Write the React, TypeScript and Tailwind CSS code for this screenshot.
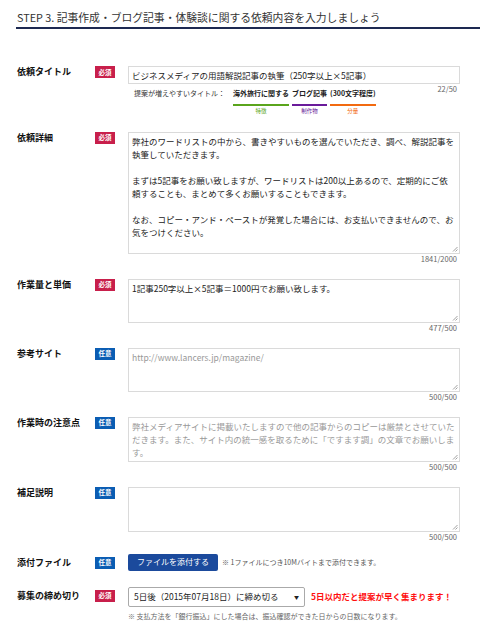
import React from "react";

const font = { fontFamily: '"Noto Sans CJK JP", "Noto Sans", sans-serif' };

const Badge = ({ required }: { required: boolean }) => (
  <div
    className={
      "w-[20px] h-[12px] flex items-center justify-center text-white text-[6.5px] leading-none font-bold " +
      (required ? "bg-[#c81f4b]" : "bg-[#0b5db3]")
    }
  >
    {required ? "必須" : "任意"}
  </div>
);

const Grip = () => (
  <svg className="absolute right-[1px] bottom-[1px]" width="6" height="6" viewBox="0 0 6 6">
    <path d="M5.5 1 L1 5.5 M5.5 3.5 L3.5 5.5" stroke="#888" strokeWidth="0.8" />
  </svg>
);

const Row = ({
  label,
  required,
  className = "",
  children,
}: {
  label: string;
  required: boolean;
  className?: string;
  children: React.ReactNode;
}) => (
  <div className={"flex items-start " + className}>
    <div className="w-[79px] pl-[1px] text-[9px] leading-[12px] font-bold text-[#111]">{label}</div>
    <Badge required={required} />
    <div className="ml-[13px] w-[332px]">{children}</div>
  </div>
);

const Count = ({ value }: { value: string }) => (
  <div className="text-right pr-[3px] text-[7.5px] leading-[10px] text-[#666]">{value}</div>
);

const Area = ({
  lines,
  height,
  muted = false,
}: {
  lines: string[];
  height: string;
  muted?: boolean;
}) => (
  <div
    className={
      "relative border border-[#dadada] bg-white pl-[3px] pt-[2px] text-[8.5px] leading-[13px] " +
      height +
      (muted ? " text-[#999]" : " text-[#222]")
    }
  >
    {lines.map((l, i) =>
      l === "" ? (
        <div key={i} className="h-[13px]" />
      ) : (
        <div key={i} className="whitespace-nowrap">
          {l}
        </div>
      )
    )}
    <Grip />
  </div>
);

const Segment = ({ text, tag, color }: { text: string; tag: string; color: string }) => (
  <div className="flex flex-col items-stretch">
    <div className="text-[7px] leading-[10px] font-bold text-[#222] whitespace-nowrap">{text}</div>
    <div className={"mt-[6px] h-[1.5px] " + color.split(" ")[0]} />
    <div className={"pt-[1px] text-center text-[5.5px] leading-[8px] " + color.split(" ")[1]}>{tag}</div>
  </div>
);

export default function App() {
  return (
    <div style={font} className="w-[480px] h-[623px] bg-white overflow-hidden pl-[16px] text-[#222]">
      {/* Step heading */}
      <div className="pt-[10px] pb-[2px] pl-[1px] border-b-2 border-[#1d2951] text-[10.8px] leading-[15px] text-[#333]">
        STEP 3. 記事作成・ブログ記事・体験談に関する依頼内容を入力しましょう
      </div>

      <Row label="依頼タイトル" required className="mt-[37px]">
        <div className="h-[18px] border border-[#dadada] pl-[3px] flex items-center text-[8.5px] text-[#222] whitespace-nowrap">
          ビジネスメディアの用語解説記事の執筆（250字以上×5記事）
        </div>
        <div className="flex justify-between items-start">
          <div className="mt-[4px] pl-[6px] flex items-start gap-[3px]">
            <div className="text-[7px] leading-[10px] text-[#333] whitespace-nowrap mr-[5px]">
              提案が増えやすいタイトル：
            </div>
            <Segment text="海外旅行に関する" tag="特徴" color="bg-[#5aa51c] text-[#5aa51c]" />
            <Segment text="ブログ記事" tag="制作物" color="bg-[#6a1b9a] text-[#6a1b9a]" />
            <Segment text="(300文字程度)" tag="分量" color="bg-[#f26a10] text-[#f26a10]" />
          </div>
          <Count value="22/50" />
        </div>
      </Row>

      <Row label="依頼詳細" required className="mt-[17px]">
        <Area
          height="h-[122px]"
          lines={[
            "弊社のワードリストの中から、書きやすいものを選んでいただき、調べ、解説記事を",
            "執筆していただきます。",
            "",
            "まずは5記事をお願い致しますが、ワードリストは200以上あるので、定期的にご依",
            "頼することも、まとめて多くお願いすることもできます。",
            "",
            "なお、コピー・アンド・ペーストが発覚した場合には、お支払いできませんので、お",
            "気をつけください。",
          ]}
        />
        <Count value="1841/2000" />
      </Row>

      <Row label="作業量と単価" required className="mt-[15px]">
        <Area height="h-[44px]" lines={["1記事250字以上×5記事＝1000円でお願い致します。"]} />
        <Count value="477/500" />
      </Row>

      <Row label="参考サイト" required={false} className="mt-[15px]">
        <Area height="h-[44px]" muted lines={["http://www.lancers.jp/magazine/"]} />
        <Count value="500/500" />
      </Row>

      <Row label="作業時の注意点" required={false} className="mt-[15px]">
        <Area
          height="h-[45px]"
          muted
          lines={[
            "弊社メディアサイトに掲載いたしますので他の記事からのコピーは厳禁とさせていた",
            "だきます。また、サイト内の統一感を取るために「ですます調」の文章でお願いしま",
            "す。",
          ]}
        />
        <Count value="500/500" />
      </Row>

      <Row label="補足説明" required={false} className="mt-[15px]">
        <Area height="h-[45px]" lines={[]} />
        <Count value="500/500" />
      </Row>

      <Row label="添付ファイル" required={false} className="mt-[15px]">
        <div className="flex items-center -mt-[3px]">
          <button className="w-[90px] h-[17px] rounded-[2px] bg-[#1b4a9c] text-white text-[8px] leading-none">
            ファイルを添付する
          </button>
          <span className="ml-[4px] text-[7px] text-[#555] whitespace-nowrap">
            ※ 1ファイルにつき10Mバイトまで添付できます。
          </span>
        </div>
      </Row>

      <Row label="募集の締め切り" required className="mt-[19px]">
        <div className="flex items-center -mt-[3px]">
          <div className="w-[177px] h-[20px] border border-[#aaa] rounded-[2px] bg-white flex items-center justify-between pl-[5px] pr-[5px] text-[8.5px] text-[#222] whitespace-nowrap">
            <span>5日後（2015年07月18日）に締め切る</span>
            <span className="text-[5px]">▼</span>
          </div>
          <span className="ml-[6px] text-[8.5px] font-bold text-[#ff1010] whitespace-nowrap">
            5日以内だと提案が早く集まります！
          </span>
        </div>
        <div className="mt-[4px] text-[7px] leading-[10px] text-[#666] whitespace-nowrap">
          ※ 支払方法を「銀行振込」にした場合は、振込確認ができた日からの日数になります。
        </div>
      </Row>
    </div>
  );
}
